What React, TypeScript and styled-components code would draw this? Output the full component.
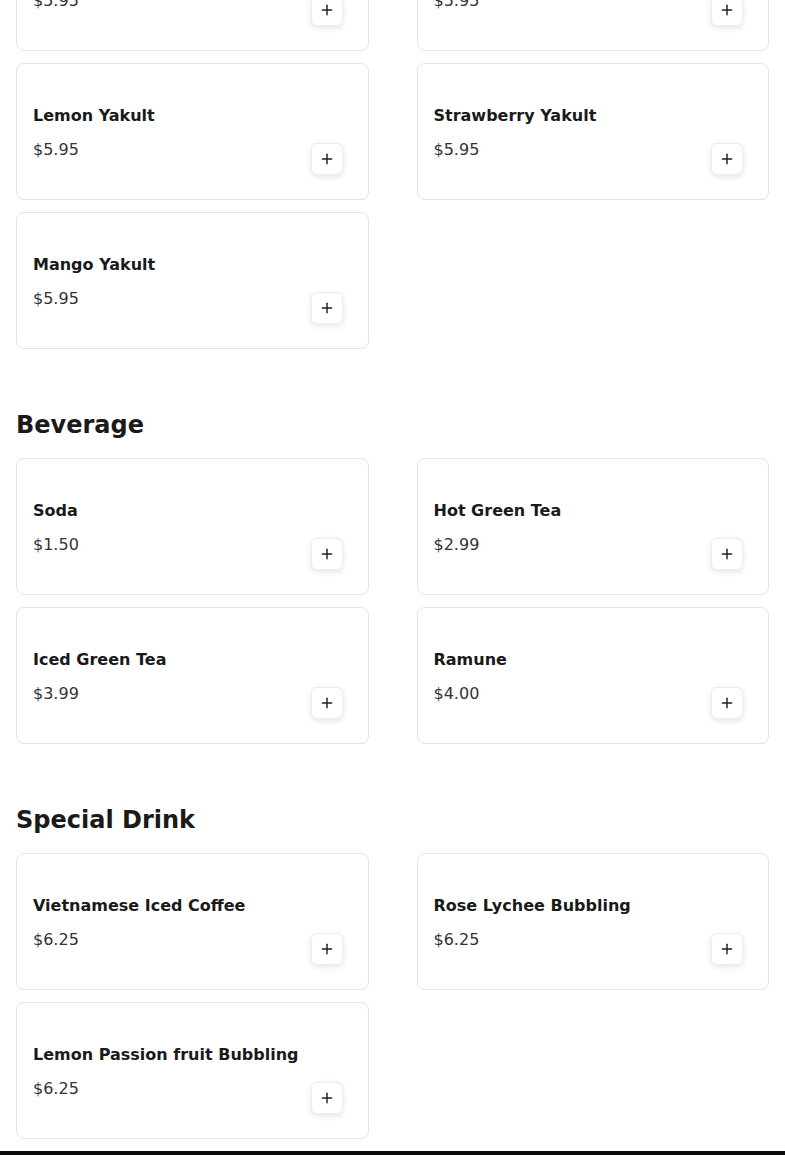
import styled, { createGlobalStyle } from "styled-components";
import { Plus } from "lucide-react";

const palette = {
  page: "#ffffff",
  text: "#1a1a1a",
  price: "#333333",
  border: "#e4e4e4",
  buttonBorder: "#ececec",
  bar: "#0b0b0b",
};

const GlobalStyle = createGlobalStyle`
  html, body {
    margin: 0;
    padding: 0;
    background: ${palette.page};
  }
  body {
    font-family: "DejaVu Sans", "Noto Sans", sans-serif;
    color: ${palette.text};
  }
  * {
    box-sizing: border-box;
  }
`;

const Page = styled.main`
  margin-top: -86px;
  padding: 0 16px;
  display: flex;
  flex-direction: column;
  gap: 59px;
`;

const Section = styled.section`
  display: flex;
  flex-direction: column;
`;

const SectionTitle = styled.h2`
  margin: 0 0 16px;
  font-size: 24px;
  line-height: 34px;
  font-weight: 700;
  color: ${palette.text};
`;

const Grid = styled.div`
  display: grid;
  grid-template-columns: 1fr 1fr;
  column-gap: 48px;
  row-gap: 12px;
`;

const Card = styled.article`
  display: flex;
  justify-content: space-between;
  align-items: flex-end;
  min-height: 137px;
  padding: 41px 25px 24px 16px;
  border: 1px solid ${palette.border};
  border-radius: 8px;
  background: #fff;
`;

const Info = styled.div`
  display: flex;
  flex-direction: column;
  gap: 12px;
  padding-bottom: 14px;
`;

const Name = styled.h3`
  margin: 0;
  font-size: 16px;
  line-height: 22px;
  font-weight: 700;
  color: ${palette.text};
`;

const Price = styled.span`
  font-size: 16px;
  line-height: 22px;
  color: ${palette.price};
`;

const AddButton = styled.button`
  appearance: none;
  width: 32px;
  height: 32px;
  display: inline-flex;
  align-items: center;
  justify-content: center;
  padding: 0;
  background: #fff;
  border: 1px solid ${palette.buttonBorder};
  border-radius: 6px;
  box-shadow: 0 2px 6px rgba(0, 0, 0, 0.1);
  color: #222;
  cursor: pointer;
`;

const CartBar = styled.footer`
  margin-top: 12px;
  height: 64px;
  background: ${palette.bar};
`;

type Item = { name: string; price: string };
type Menu = { title?: string; items: Item[] };

const menu: Menu[] = [
  {
    items: [
      { name: "Original Yakult", price: "$5.95" },
      { name: "Grape Yakult", price: "$5.95" },
      { name: "Lemon Yakult", price: "$5.95" },
      { name: "Strawberry Yakult", price: "$5.95" },
      { name: "Mango Yakult", price: "$5.95" },
    ],
  },
  {
    title: "Beverage",
    items: [
      { name: "Soda", price: "$1.50" },
      { name: "Hot Green Tea", price: "$2.99" },
      { name: "Iced Green Tea", price: "$3.99" },
      { name: "Ramune", price: "$4.00" },
    ],
  },
  {
    title: "Special Drink",
    items: [
      { name: "Vietnamese Iced Coffee", price: "$6.25" },
      { name: "Rose Lychee Bubbling", price: "$6.25" },
      { name: "Lemon Passion fruit Bubbling", price: "$6.25" },
    ],
  },
];

function MenuCard({ item }: { item: Item }) {
  return (
    <Card>
      <Info>
        <Name>{item.name}</Name>
        <Price>{item.price}</Price>
      </Info>
      <AddButton type="button" aria-label={`Add ${item.name}`}>
        <Plus size={16} strokeWidth={2.2} />
      </AddButton>
    </Card>
  );
}

export default function App() {
  return (
    <>
      <GlobalStyle />
      <Page>
        {menu.map((section, i) => (
          <Section key={section.title ?? i}>
            {section.title && <SectionTitle>{section.title}</SectionTitle>}
            <Grid>
              {section.items.map((item) => (
                <MenuCard key={item.name} item={item} />
              ))}
            </Grid>
          </Section>
        ))}
      </Page>
      <CartBar />
    </>
  );
}
